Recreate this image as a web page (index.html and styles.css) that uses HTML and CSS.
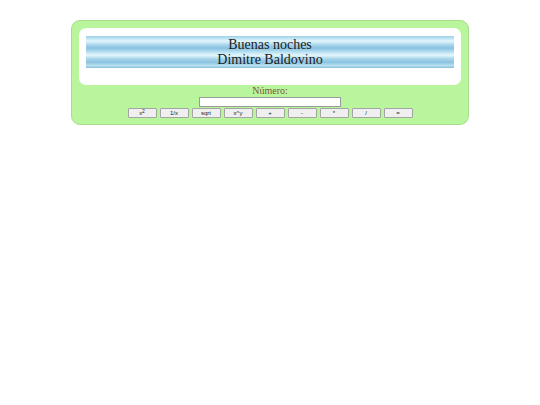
FILE: index.html
```html
<!DOCTYPE html>
<html lang="es">
<head>
<meta charset="utf-8">
<title>Calculadora</title>
<link rel="stylesheet" href="styles.css">
</head>
<body>
<div class="card">
  <div class="header">
    <div class="banner">
      <div>Buenas noches</div>
      <div>Dimitre Baldovino</div>
    </div>
  </div>
  <div class="label">Número:</div>
  <div class="input-row"><input class="num" type="text"></div>
  <div class="buttons">
    <button class="btn">x<sup>2</sup></button>
    <button class="btn">1/x</button>
    <button class="btn">sqrt</button>
    <button class="btn">x^y</button>
    <button class="btn">+</button>
    <button class="btn">-</button>
    <button class="btn">*</button>
    <button class="btn">/</button>
    <button class="btn">=</button>
  </div>
</div>
</body>
</html>
```
FILE: styles.css
```css
html, body {
  margin: 0;
  padding: 0;
  background: #ffffff;
}
body {
  font-family: "Liberation Serif", "Times New Roman", serif;
}
.card {
  box-sizing: border-box;
  width: 398px;
  height: 105px;
  margin: 20px auto 0;
  background: #b9f59c;
  border: 1px solid #a5df8b;
  border-radius: 9px;
  padding: 7px 7px 0;
}
.header {
  box-sizing: border-box;
  height: 57px;
  background: #ffffff;
  border-radius: 7px;
  padding: 8px 7px 0 7px;
}
.banner {
  height: 32px;
  box-sizing: border-box;
  padding-top: 1px;
  background: linear-gradient(to bottom,
    #9fcfe8 0%, #bfe4f3 8%, #e2f6fb 16%, #a8d5ec 28%, #88c1e0 38%,
    #b8e0f1 50%, #e4f7fc 60%, #a6d3ea 72%, #8ac2e1 82%, #b9e0f0 92%, #86bedd 100%);
  text-align: center;
  font-size: 14px;
  line-height: 15px;
  color: #1b1b1b;
}
.label {
  text-align: center;
  font-size: 10px;
  line-height: 10px;
  margin-top: 1px;
  color: #7e5638;
}
.input-row {
  display: flex;
  justify-content: center;
  margin-top: 1px;
}
.num {
  box-sizing: border-box;
  width: 142px;
  height: 10px;
  margin: 0;
  padding: 0;
  border: 1px solid #9a9a9a;
  background: #ffffff;
}
.buttons {
  display: flex;
  justify-content: center;
  gap: 3px;
  margin-top: 1px;
}
.btn {
  box-sizing: border-box;
  width: 29px;
  height: 10px;
  margin: 0;
  padding: 0;
  border: 1px solid #a4a4a4;
  border-radius: 1px;
  background: #efefef;
  font-family: "Liberation Sans", Arial, sans-serif;
  font-size: 6px;
  line-height: 8px;
  color: #222;
}
.btn sup {
  font-size: 4.5px;
  line-height: 0;
  vertical-align: 2px;
}
```
